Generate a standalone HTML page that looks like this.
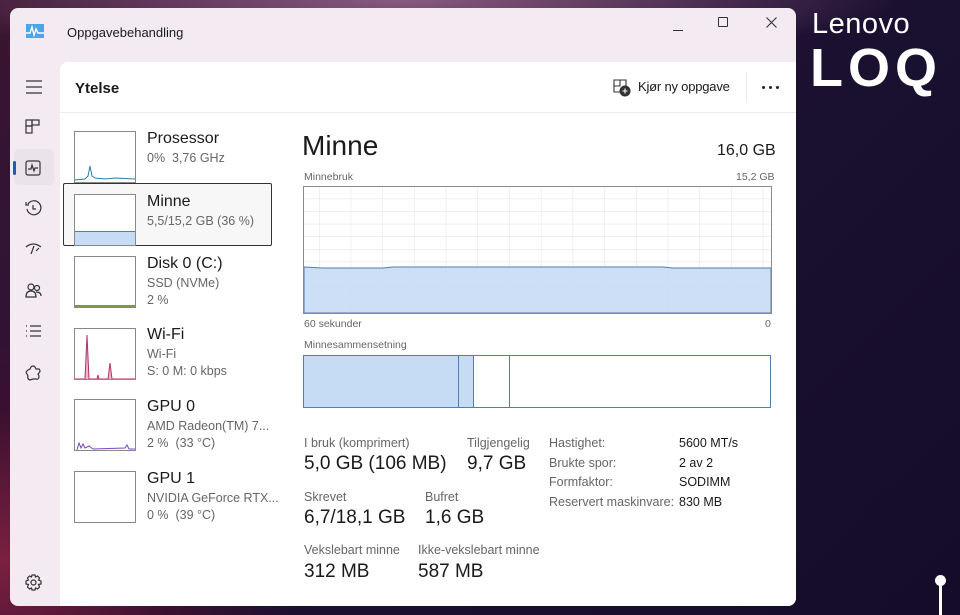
<!DOCTYPE html>
<html><head><meta charset="utf-8"><style>
*{margin:0;padding:0;box-sizing:border-box}
body{width:960px;height:615px;overflow:hidden;font-family:"Segoe UI","Liberation Sans",sans-serif;position:relative;
background:radial-gradient(ellipse 300px 250px at 0 560px,#7a2040 0%,#3a1030 60%,transparent 100%),radial-gradient(ellipse 500px 60px at 400px 0,#8a5a80 0%,transparent 100%),linear-gradient(135deg,#3a1530 0%,#2a1238 30%,#1a1030 60%,#140c28 100%);}
.a{position:absolute;white-space:nowrap}
.win{position:absolute;left:10px;top:8px;width:786px;height:598px;background:#f3ebf1;border-radius:8px;overflow:hidden}
.panel{position:absolute;left:50px;top:54px;width:736px;height:544px;background:#fff;border-top-left-radius:8px}
.t{color:#1a1a1a}.g{color:#666}
.thumb{position:absolute;left:14px;width:62px;height:52px;border:1px solid #888;background:#fff}
.big{font-size:19px;color:#1a1a1a}
.lab{font-size:12.5px;color:#666}
</style></head><body>
<div class="a" style="left:812px;top:8px;color:#fff;font-size:29px;font-weight:300;letter-spacing:0.5px">Lenovo</div>
<div class="a" style="left:810px;top:42px;color:#fff;font-size:54px;font-weight:bold;letter-spacing:5px;line-height:52px">LOQ</div>
<div class="a" style="left:939px;top:578px;width:3px;height:37px;background:#fff"></div>
<div class="a" style="left:935px;top:575px;width:11px;height:11px;border-radius:50%;background:#fff"></div>

<div class="win">
 <svg class="a" style="left:16px;top:16px" width="18" height="14"><rect width="18" height="14" fill="#4aa6e8"/><path d="M0 9 L4 9 L6 3 L8 11 L10 5 L12 9 L18 9" stroke="#fff" fill="none" stroke-width="1.4"/></svg>
 <div class="a t" style="left:57px;top:17px;font-size:13px">Oppgavebehandling</div>
 <div class="a" style="left:663px;top:14px;width:10px;border-top:1px solid #333;top:22px"></div>
 <div class="a" style="left:708px;top:9px;width:10px;height:10px;border:1px solid #333;border-radius:1px"></div>
 <svg class="a" style="left:756px;top:9px" width="11" height="11"><path d="M0.5 0.5L10.5 10.5M10.5 0.5L0.5 10.5" stroke="#333" stroke-width="1.1"/></svg>
 <!-- sidebar icons -->
 <svg class="a" style="left:16px;top:72px" width="16" height="14"><path d="M0 1H16M0 7H16M0 13H16" stroke="#333" stroke-width="1.2"/></svg>
 <svg class="a" style="left:15px;top:111px" width="16" height="16" fill="none" stroke="#333" stroke-width="1.2"><rect x="1" y="1" width="6" height="6"/><rect x="7" y="1" width="7" height="5"/><rect x="1" y="7" width="6" height="7"/></svg>
 <div class="a" style="left:4px;top:141px;width:40px;height:36px;background:#ebe3ea;border-radius:5px"></div>
 <div class="a" style="left:3px;top:153px;width:3px;height:14px;background:#1a5fb4;border-radius:2px"></div>
 <svg class="a" style="left:15px;top:152px" width="16" height="16" fill="none" stroke="#333" stroke-width="1.2"><rect x="1" y="1" width="14" height="14" rx="2"/><path d="M3 9H6L7 5L9 11L10 8H13"/></svg>
 <svg class="a" style="left:15px;top:192px" width="17" height="17" fill="none" stroke="#333" stroke-width="1.2"><path d="M3 4A7 7 0 1 1 2 9M1 2V5H4M8 5V9H11"/></svg>
 <svg class="a" style="left:15px;top:233px" width="17" height="14" fill="none" stroke="#333" stroke-width="1.2"><path d="M1 6Q8 0 16 6M6 13L9 5M11 10L14 7"/></svg>
 <svg class="a" style="left:15px;top:274px" width="17" height="17" fill="none" stroke="#333" stroke-width="1.2"><circle cx="6" cy="5" r="3"/><circle cx="12" cy="6" r="2.5"/><path d="M1 15Q1 9 6 9Q11 9 11 15ZM11 10Q16 10 16 14"/></svg>
 <svg class="a" style="left:15px;top:317px" width="17" height="13" fill="none" stroke="#333" stroke-width="1.2"><path d="M1 1H2M1 6H2M1 11H2M5 1H16M5 6H16M5 11H16"/></svg>
 <svg class="a" style="left:15px;top:357px" width="17" height="17" fill="none" stroke="#333" stroke-width="1.2"><path d="M6 2Q8 0 10 2L11 4L14 4Q16 6 14 8L13 9L14 11Q14 15 11 14L8 14L5 15Q2 14 3 11L2 9Q0 7 3 5L5 4Z"/></svg>
 <svg class="a" style="left:15px;top:566px" width="17" height="17" fill="none" stroke="#333" stroke-width="1.2"><circle cx="8.5" cy="8.5" r="2.5"/><path d="M7 1H10L10.5 3L12.5 2L14.5 4L13.5 6L16 7V10L13.5 10.5L14.5 13L12.5 15L10.5 14L10 16H7L6.5 14L4.5 15L2.5 13L3.5 10.5L1 10V7L3.5 6L2.5 4L4.5 2L6.5 3Z"/></svg>

 <div class="panel">
  <div class="a t" style="left:15px;top:18px;font-size:15px;font-weight:600">Ytelse</div>
  <svg class="a" style="left:553px;top:17px" width="18" height="18" fill="none" stroke="#333" stroke-width="1.1"><path d="M1 1H7V7H1ZM7 1H13V7M1 7V13H8"/><circle cx="12" cy="12" r="5" fill="#333"/><path d="M12 9.5V14.5M9.5 12H14.5" stroke="#fff"/></svg>
  <div class="a t" style="left:578px;top:17px;font-size:13px;letter-spacing:-0.2px">Kjør ny oppgave</div>
  <div class="a" style="left:686px;top:10px;width:1px;height:30px;background:#eee"></div>
  <div class="a" style="left:702px;top:24px;width:3px;height:3px;border-radius:50%;background:#222;box-shadow:7px 0 #222,14px 0 #222"></div>
  <div class="a" style="left:0;top:50px;width:736px;height:1px;background:#eee"></div>

  <!-- list -->
  <div class="thumb" style="top:69px"><svg width="60" height="50"><path d="M0 48L10 47L13 44L15 34L17 44L20 46L30 47L40 46L60 47" stroke="#2a7fa8" fill="none"/></svg></div>
  <div class="a t" style="left:87px;top:68px;font-size:16px">Prosessor</div>
  <div class="a g" style="left:87px;top:89px;font-size:12.5px">0%&nbsp; 3,76 GHz</div>

  <div class="a" style="left:3px;top:121px;width:209px;height:63px;border:1px solid #333;background:#f7f7f7;border-radius:2px"></div>
  <div class="thumb" style="top:132px"><div style="position:absolute;left:0;right:0;bottom:0;height:14px;background:#c6dcf5;border-top:1px solid #4f7fb0"></div></div>
  <div class="a t" style="left:87px;top:131px;font-size:16px">Minne</div>
  <div class="a g" style="left:87px;top:152px;font-size:12.5px">5,5/15,2 GB (36 %)</div>

  <div class="thumb" style="top:194px"><div style="position:absolute;left:0;right:0;bottom:0;height:2px;background:#7a9a40"></div></div>
  <div class="a t" style="left:87px;top:193px;font-size:16px">Disk 0 (C:)</div>
  <div class="a g" style="left:87px;top:214px;font-size:12.5px">SSD (NVMe)</div>
  <div class="a g" style="left:87px;top:231px;font-size:12.5px">2 %</div>

  <div class="thumb" style="top:266px"><svg width="60" height="50"><path d="M0 50L10 50L12 6L14 50L22 50L23 46L24 50L33 50L35 34L37 50L60 50" stroke="#b0306a" fill="#e9b8cc"/></svg></div>
  <div class="a t" style="left:87px;top:264px;font-size:16px">Wi-Fi</div>
  <div class="a g" style="left:87px;top:285px;font-size:12.5px">Wi-Fi</div>
  <div class="a g" style="left:87px;top:302px;font-size:12.5px">S: 0 M: 0 kbps</div>

  <div class="thumb" style="top:337px"><svg width="60" height="50"><path d="M2 50L4 43L6 48L8 44L10 48L14 46L18 49L50 48L52 45L54 49L60 49" stroke="#7a45c0" fill="none"/></svg></div>
  <div class="a t" style="left:87px;top:336px;font-size:16px">GPU 0</div>
  <div class="a g" style="left:87px;top:357px;font-size:12.5px">AMD Radeon(TM) 7...</div>
  <div class="a g" style="left:87px;top:374px;font-size:12.5px">2 %&nbsp; (33 °C)</div>

  <div class="thumb" style="top:409px"></div>
  <div class="a t" style="left:87px;top:408px;font-size:16px">GPU 1</div>
  <div class="a g" style="left:87px;top:429px;font-size:12.5px">NVIDIA GeForce RTX...</div>
  <div class="a g" style="left:87px;top:446px;font-size:12.5px">0 %&nbsp; (39 °C)</div>

  <!-- detail -->
  <div class="a t" style="left:242px;top:68px;font-size:28px">Minne</div>
  <div class="a t" style="left:657px;top:80px;font-size:16px">16,0 GB</div>
  <div class="a g" style="left:244px;top:109px;font-size:10.5px">Minnebruk</div>
  <div class="a g" style="left:676px;top:109px;font-size:10.5px">15,2 GB</div>
  <svg class="a" style="left:243px;top:124px" width="469" height="128">
   <defs><pattern id="gr" width="31.7" height="12.6" patternUnits="userSpaceOnUse" x="16"><path d="M0 0V12.6M0 0H31.7" stroke="#e2e2e2" fill="none"/></pattern></defs>
   <rect x="0" y="0" width="469" height="128" fill="url(#gr)"/>
   <path d="M1 81L20 82L80 82L90 81L360 81L370 82L468 82L468 127L1 127Z" fill="#c6dcf5" fill-opacity="0.9" stroke="#4f7fb0"/>
   <rect x="0.5" y="0.5" width="468" height="127" fill="none" stroke="#8a8a8a"/>
  </svg>
  <div class="a g" style="left:244px;top:256px;font-size:10.5px">60 sekunder</div>
  <div class="a g" style="left:705px;top:256px;font-size:10.5px">0</div>
  <div class="a g" style="left:244px;top:277px;font-size:10.5px">Minnesammensetning</div>
  <svg class="a" style="left:243px;top:293px" width="469" height="54">
   <rect x="0.5" y="0.5" width="467" height="52" fill="#fff" stroke="#4f7fb0"/>
   <rect x="1" y="1" width="169" height="51" fill="#c6dcf5"/>
   <path d="M155.5 1V52M170.5 1V52M206.5 1V52" stroke="#4f7fb0"/>
  </svg>

  <div class="a lab" style="left:244px;top:374px">I bruk (komprimert)</div>
  <div class="a big" style="left:244px;top:391px">5,0 GB (106 MB)</div>
  <div class="a lab" style="left:407px;top:374px">Tilgjengelig</div>
  <div class="a big" style="left:407px;top:391px">9,7 GB</div>
  <div class="a lab" style="left:244px;top:428px">Skrevet</div>
  <div class="a big" style="left:244px;top:445px">6,7/18,1 GB</div>
  <div class="a lab" style="left:365px;top:428px">Bufret</div>
  <div class="a big" style="left:365px;top:445px">1,6 GB</div>
  <div class="a lab" style="left:244px;top:481px">Vekslebart minne</div>
  <div class="a big" style="left:244px;top:499px">312 MB</div>
  <div class="a lab" style="left:358px;top:481px">Ikke-vekslebart minne</div>
  <div class="a big" style="left:358px;top:499px">587 MB</div>

  <div class="a lab" style="left:489px;top:374px">Hastighet:</div>
  <div class="a lab" style="left:489px;top:394px">Brukte spor:</div>
  <div class="a lab" style="left:489px;top:413px">Formfaktor:</div>
  <div class="a lab" style="left:489px;top:433px">Reservert maskinvare:</div>
  <div class="a t" style="left:619px;top:374px;font-size:12.5px">5600 MT/s</div>
  <div class="a t" style="left:619px;top:394px;font-size:12.5px">2 av 2</div>
  <div class="a t" style="left:619px;top:413px;font-size:12.5px">SODIMM</div>
  <div class="a t" style="left:619px;top:433px;font-size:12.5px">830 MB</div>
 </div>
</div>
</body></html>
